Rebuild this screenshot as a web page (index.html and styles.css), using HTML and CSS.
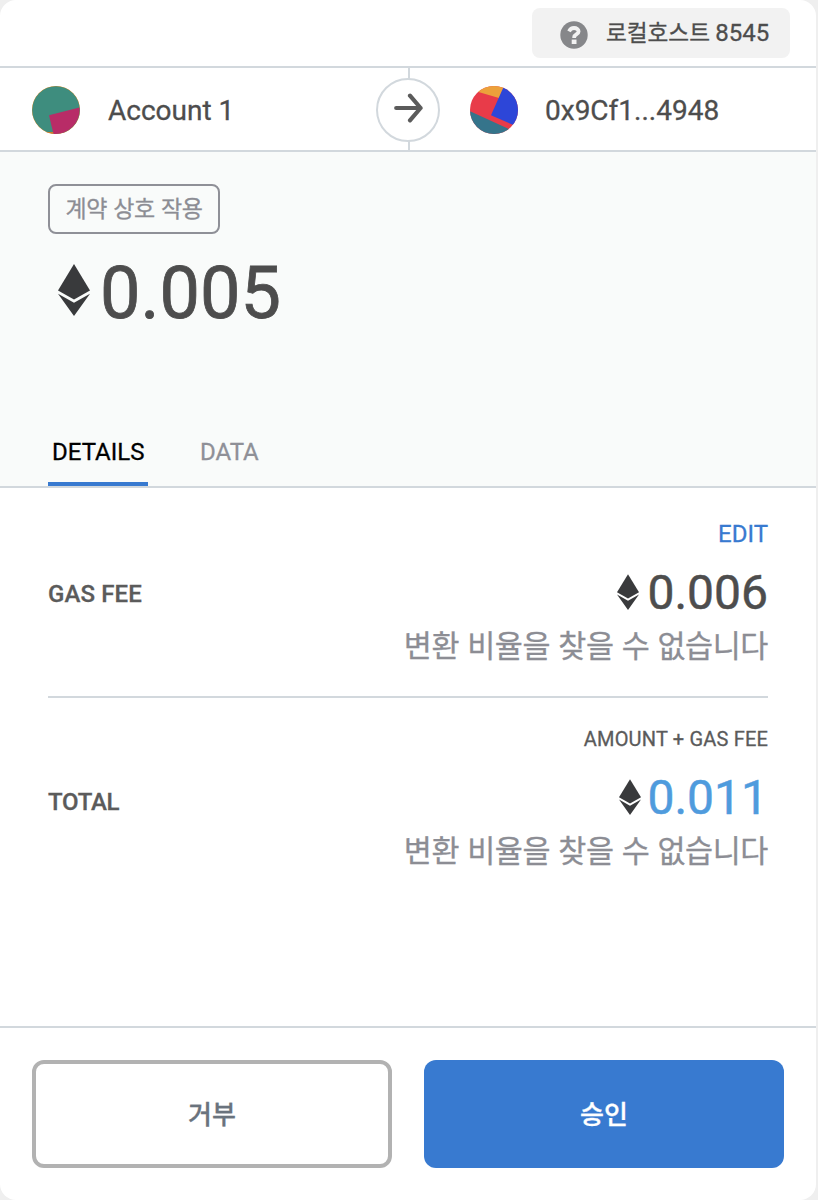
FILE: index.html
```html
<!DOCTYPE html>
<html lang="ko">
<head>
<meta charset="utf-8">
<title>계약 상호 작용</title>
<link rel="stylesheet" href="styles.css">
</head>
<body>
<svg class="symbols" width="0" height="0" aria-hidden="true">
  <symbol id="eth" viewBox="0 0 32 52">
    <path d="M16 0 32 26.5 16 35.5 0 26.5Z"/>
    <path d="M0 29.7 16 38.8 32 29.7 16 52Z"/>
  </symbol>
</svg>
<main class="card">
  <header class="topbar">
    <div class="network">
      <svg class="network-icon" viewBox="0 0 28 28">
        <circle cx="14" cy="14" r="13.7" fill="#86878a"/>
        <path d="M9 10.4C10.2 8 11.8 7 14 7c2.7 0 4.6 1.4 4.6 3.5 0 3-4.4 2.9-4.4 5.6v.8" fill="none" stroke="#f2f2f2" stroke-width="3.8"/>
        <path d="M11.7 18.6h4.8v4.4h-4.8z" fill="#f2f2f2"/>
      </svg>
      <span class="network-name">로컬호스트 <span class="latin">8545</span></span>
    </div>
  </header>
  <section class="parties">
    <div class="party sender">
      <svg class="avatar" viewBox="0 0 48 48">
        <circle cx="24" cy="24" r="24" fill="#e48a22"/>
        <circle cx="24" cy="24" r="23.8" fill="#3e8d7e"/>
        <path d="M17 29.3 47.4 21.6A24 24 0 0 1 21.5 47.9Z" fill="#b82c67"/>
        <path d="M14 46.2a24 24 0 0 0 7.5 1.6L21 46Z" fill="#d97826"/>
      </svg>
      <span>Account 1</span>
    </div>
    <div class="divider">
      <div class="arrow">
        <svg viewBox="0 0 30 30" width="30" height="30" fill="none" stroke="#5b5b5b" stroke-width="4.2" stroke-linecap="round" stroke-linejoin="round"><path d="M3.2 15H27.6M17 2.7 27.6 15 17 27.3"/></svg>
      </div>
    </div>
    <div class="party recipient">
      <svg class="avatar" viewBox="0 0 48 48">
        <clipPath id="round"><circle cx="24" cy="24" r="24"/></clipPath>
        <g clip-path="url(#round)">
          <path d="M0 0h48v48H0z" fill="#e83b49"/>
          <path d="M5 5 29 12 36-2H5z" fill="#eca13b"/>
          <path d="M34 0 21 29.3 48 41V0z" fill="#2d46d8"/>
          <path d="M-1 24.8 42 44.5V50H-1z" fill="#35748b"/>
        </g>
      </svg>
      <span>0x9Cf1...4948</span>
    </div>
  </section>
  <section class="summary">
    <div class="action">계약 상호 작용</div>
    <div class="amount amount-large"><svg class="eth"><use href="#eth"/></svg><span>0.005</span></div>
    <nav class="tabs">
      <div class="tab tab-active">DETAILS</div>
      <div class="tab">DATA</div>
    </nav>
  </section>
  <section class="details">
    <div class="row gas">
      <div class="label">GAS FEE</div>
      <div class="values">
        <a class="edit">EDIT</a>
        <div class="amount"><svg class="eth"><use href="#eth"/></svg><span>0.006</span></div>
        <div class="rate">변환 비율을 찾을 수 없습니다</div>
      </div>
    </div>
    <div class="row total">
      <div class="label">TOTAL</div>
      <div class="values">
        <div class="formula">AMOUNT + GAS FEE</div>
        <div class="amount amount-total"><svg class="eth"><use href="#eth"/></svg><span>0.011</span></div>
        <div class="rate">변환 비율을 찾을 수 없습니다</div>
      </div>
    </div>
  </section>
  <footer class="actions">
    <button class="button reject">거부</button>
    <button class="button confirm">승인</button>
  </footer>
</main>
</body>
</html>
```
FILE: styles.css
```css
* { box-sizing: border-box; }
body {
  margin: 0;
  background: #efefef;
  font-family: Roboto, "Noto Sans CJK KR", sans-serif;
  color: #4d4d4d;
  -webkit-text-stroke: 0.3px currentColor;
}
.symbols { display: block; }
.card {
  width: 816px;
  height: 1200px;
  display: flex;
  flex-direction: column;
  background: #fff;
  border-radius: 16px;
  overflow: hidden;
}
.topbar {
  height: 68px;
  flex: none;
  display: flex;
  justify-content: flex-end;
  padding: 8px 26px 0 0;
  border-bottom: 2px solid #d2d8dd;
}
.network {
  width: 258px;
  height: 50px;
  display: flex;
  align-items: center;
  gap: 18px;
  padding: 3px 0 0 28px;
  background: #f2f2f2;
  border-radius: 8px;
}
.network-icon { width: 28px; height: 28px; flex: none; }
.network-name {
  font: 22.6px/40px "Noto Sans CJK KR", sans-serif;
  white-space: nowrap;
  margin-top: -5px;
}
.latin { font-family: Roboto, sans-serif; font-size: 24px; margin-left: -1px; }
.parties {
  height: 84px;
  flex: none;
  display: flex;
  border-bottom: 2px solid #d2d8dd;
  font-size: 28px;
  line-height: 32px;
}
.party { display: flex; align-items: center; gap: 28px; padding-top: 2px; }
.party span { padding-top: 2px; }
.sender { width: 376px; padding-left: 32px; }
.recipient { padding-left: 30px; gap: 27px; }
.avatar { width: 48px; height: 48px; flex: none; }
.divider {
  width: 64px;
  display: flex;
  align-items: center;
  padding-top: 2px;
  background: linear-gradient(#d2d8dd, #d2d8dd) 32px 0 / 2px 100% no-repeat;
}
.arrow {
  width: 64px;
  height: 64px;
  display: flex;
  align-items: center;
  justify-content: center;
  padding-bottom: 4px;
  border: 2px solid #d2d8dd;
  border-radius: 50%;
  background: #fff;
}
.summary {
  height: 336px;
  flex: none;
  display: flex;
  flex-direction: column;
  align-items: flex-start;
  padding: 32px 48px 0;
  background: #f9fbfa;
  border-bottom: 2px solid #d2d8dd;
}
.action {
  width: 172px;
  height: 50px;
  border: 2px solid #8f9097;
  border-radius: 8px;
  color: #8c8d94;
  font: 23px/43px "Noto Sans CJK KR", sans-serif;
  letter-spacing: -0.35px;
  text-align: center;
  white-space: nowrap;
}
.amount { display: flex; align-items: center; font-size: 48px; line-height: 56px; }
.eth { width: 22px; height: 36px; fill: #393a3c; margin: 0 8px 3px 0; flex: none; }
.amount-large {
  height: 84px;
  margin-top: 18px;
  padding-left: 10px;
  font-size: 72px;
  line-height: 84px;
  -webkit-text-stroke-width: 0.8px;
}
.amount-large .eth { width: 32px; height: 52px; margin: 0 10px 8px 0; }
.gas .amount, .amount-total { -webkit-text-stroke-width: 0.5px; }
.amount-total .eth { margin-right: 6px; }
.amount-total span { color: #4f9bdd; -webkit-text-stroke-color: #4f9bdd; }
.eth, .network-icon { -webkit-text-stroke-width: 0; }
.tabs { display: flex; gap: 48px; margin-top: auto; font-size: 24px; line-height: 28px; }
.tab { height: 48px; padding: 0 4px; color: #8f9097; -webkit-text-stroke-color: #8f9097; }
.tab-active { width: 100px; color: #000; border-bottom: 4px solid #387ad0; -webkit-text-stroke-color: #000; }
.details { flex: 1; padding: 0 48px; }
.row { display: flex; justify-content: space-between; }
.gas { height: 210px; border-bottom: 2px solid #d2d8dd; padding-top: 32px; }
.total { padding-top: 27px; }
.label {
  font-size: 24px;
  line-height: 28px;
  font-weight: 500;
  color: #5b5b5b;
  -webkit-text-stroke-color: #5b5b5b;
}
.gas .label { margin-top: 60px; letter-spacing: 0.1px; }
.total .label { margin-top: 63px; letter-spacing: -0.3px; }
.values { display: flex; flex-direction: column; align-items: flex-end; }
.edit { color: #387ad0; font-size: 24px; line-height: 28px; -webkit-text-stroke-color: #387ad0; }
.formula {
  color: #5b5b5b;
  font-size: 20px;
  line-height: 28px;
  letter-spacing: 0.18px;
  -webkit-text-stroke-color: #5b5b5b;
}
.gas .amount { margin-top: 17px; }
.total .amount { margin-top: 17px; }
.rate {
  color: #8c8d94;
  font: 30.5px/44px "Noto Sans CJK KR", sans-serif;
  letter-spacing: -0.42px;
  margin-top: 1px;
  white-space: nowrap;
}
.action, .rate { -webkit-text-stroke-color: #8c8d94; }
.actions {
  height: 174px;
  flex: none;
  display: flex;
  gap: 32px;
  padding: 32px;
  border-top: 2px solid #d2d8dd;
}
.button {
  width: 360px;
  height: 108px;
  padding: 0 0 3px;
  border: 0;
  border-radius: 12px;
  font: 500 26px/38px "Noto Sans CJK KR", sans-serif;
}
.reject { background: #fff; border: 4px solid #b2b2b2; color: #6a737d; -webkit-text-stroke-color: #6a737d; }
.confirm { background: #387ad0; color: #fff; -webkit-text-stroke-color: #fff; }
```
